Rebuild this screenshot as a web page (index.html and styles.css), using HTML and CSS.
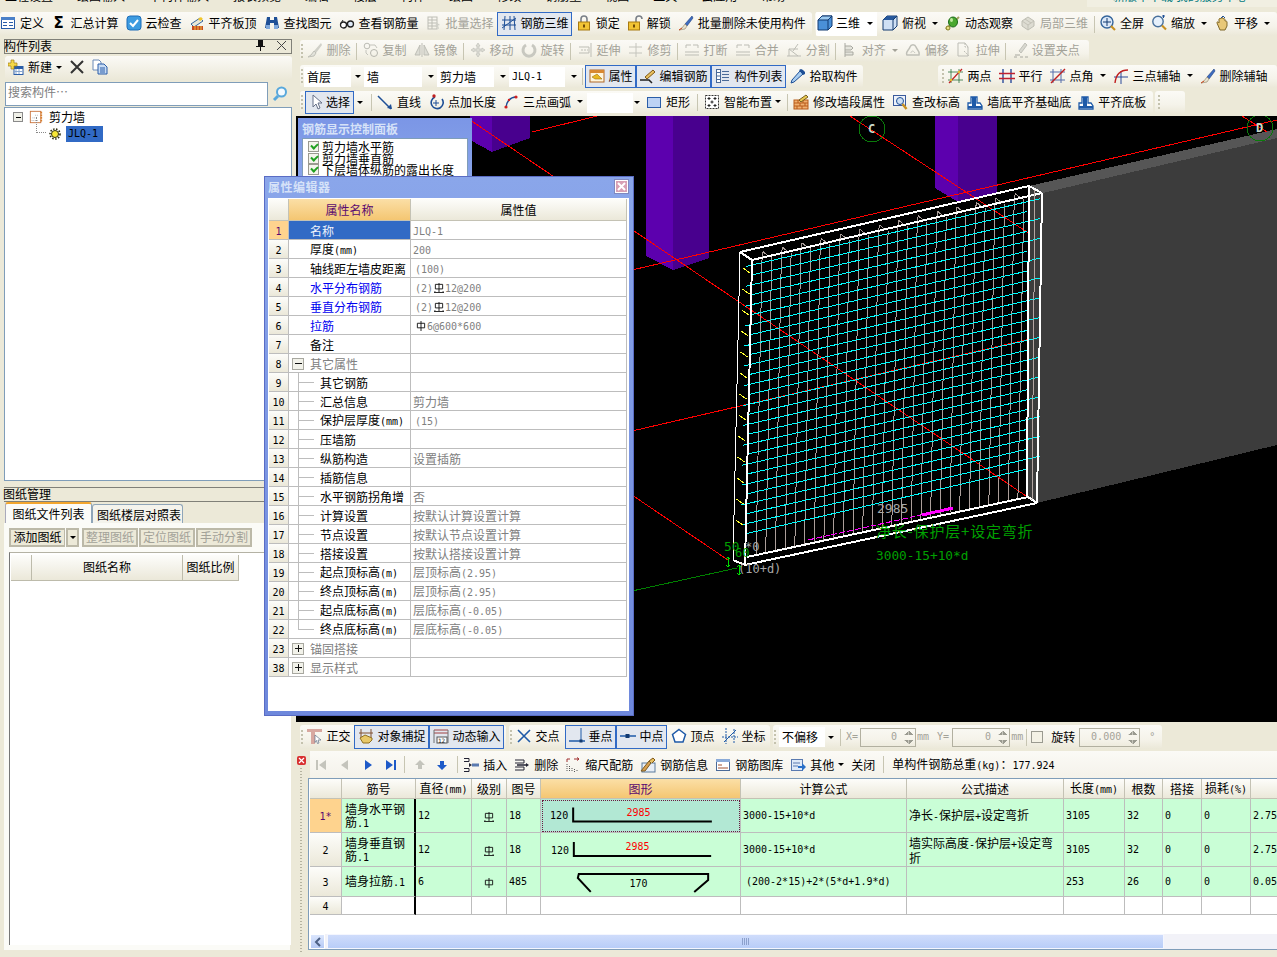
FILE: index.html
```html
<!DOCTYPE html>
<html lang="zh-CN">
<head>
<meta charset="utf-8">
<title>属性编辑器</title>
<link rel="stylesheet" href="styles.css">
</head>
<body>
<svg class="defs" width="0" height="0">
<defs>
<symbol id="def" viewBox="0 0 16 16"><rect x="1.5" y="2.5" width="13" height="11" fill="#fff" stroke="#2a5da8"/><rect x="1" y="2" width="14" height="3" fill="#4a80c8"/><path d="M3 7.5h4M3 10.5h4M9 7.5h4M9 10.5h4" stroke="#2a5da8"/></symbol>
<symbol id="cloud" viewBox="0 0 16 16"><rect x="1" y="1" width="14" height="14" rx="3" fill="#3d9be0" stroke="#1c6cb8"/><path d="M4 8l3 3 5-6" fill="none" stroke="#fff" stroke-width="2"/></symbol>
<symbol id="aligntop" viewBox="0 0 16 16"><path d="M2 9l9-6 3 3-9 6z" fill="#e8e8d8" stroke="#35659c"/><path d="M9 4l3-2 2 2-3 2z" fill="#f4c828"/><rect x="3" y="11" width="11" height="4" fill="#c84a20"/><path d="M6 11v4M9 11v4M12 11v4" stroke="#f0c040"/></symbol>
<symbol id="binoc" viewBox="0 0 16 16"><path d="M3 2h3v3h4V2h3l2 11h-5V8H6v5H1z" fill="#1e4f96"/><rect x="2" y="10" width="4" height="4" fill="#7fa8dc"/><rect x="10" y="10" width="4" height="4" fill="#7fa8dc"/></symbol>
<symbol id="glass" viewBox="0 0 16 16"><circle cx="4.5" cy="10" r="3" fill="#fff" stroke="#222" stroke-width="1.300"/><circle cx="11.5" cy="9" r="3" fill="#dfeaf8" stroke="#222" stroke-width="1.300"/><path d="M7 8.5l2-1M1.5 9L4 5" stroke="#222" fill="none"/></symbol>
<symbol id="batch" viewBox="0 0 16 16"><rect x="2" y="2" width="9" height="12" fill="none" stroke="#bdbdb5"/><path d="M2 5h9M2 8h9M2 11h9M6 2v12" stroke="#bdbdb5"/><path d="M10 7l4 3-2 .5 1 3-1 .5-1-3-1.5 1z" fill="#d0d0c8"/></symbol>
<symbol id="r3d" viewBox="0 0 16 16"><path d="M1 5h14M1 10h14M4 1l-1 14M9 1v14M13 1l1 14" stroke="#1e4f96" fill="none"/><path d="M1 13L15 3" stroke="#1e4f96"/></symbol>
<symbol id="lock" viewBox="0 0 16 16"><path d="M5 7V4a3 3 0 0 1 6 0v3" fill="none" stroke="#7a8088" stroke-width="1.600"/><rect x="2.5" y="7" width="11" height="8" fill="#f2c434" stroke="#a87a10"/><rect x="7" y="9.5" width="2" height="3" fill="#704c08"/></symbol>
<symbol id="unlock" viewBox="0 0 16 16"><path d="M9 7V4a3 3 0 0 1 6 0" fill="none" stroke="#7a8088" stroke-width="1.600"/><rect x="1.5" y="7" width="11" height="8" fill="#f2c434" stroke="#a87a10"/><rect x="6" y="9.5" width="2" height="3" fill="#704c08"/></symbol>
<symbol id="brush" viewBox="0 0 16 16"><path d="M14 1L7 9l2 2 6-8z" fill="#3d6cc0" stroke="#1e3f80" stroke-width=".6"/><path d="M7 9l2 2-2 3-6 1 3-2z" fill="#e8e4d0" stroke="#8a7a60" stroke-width=".6"/><path d="M1 15l3-2" stroke="#d04a20"/></symbol>
<symbol id="cube" viewBox="0 0 16 16"><path d="M1 5l4-4h10v10l-4 4H1z" fill="#4a90d8" stroke="#123a70"/><path d="M1 5l4-4h10l-4 4z" fill="#9ccaf0"/><path d="M1 5l4-4h10l-4 4H1M11 5v10M11 5l4-4" fill="none" stroke="#123a70"/></symbol>
<symbol id="cubet" viewBox="0 0 16 16"><path d="M1 5l4-4h10v10l-4 4H1z" fill="#cfe0f4" stroke="#123a70"/><path d="M1 5l4-4h10l-4 4z" fill="#28589c"/><path d="M11 5v10M11 5l4-4" stroke="#123a70"/></symbol>
<symbol id="orbit" viewBox="0 0 16 16"><path d="M1 14L14 2" stroke="#a0a060" stroke-width="2"/><ellipse cx="8" cy="7" rx="4.5" ry="5" fill="#4aa830" stroke="#1a6a18"/><ellipse cx="6.5" cy="5" rx="1.5" ry="2" fill="#bfe8a0"/><circle cx="3" cy="13" r="2" fill="#e8e080" stroke="#807820"/></symbol>
<symbol id="part3d" viewBox="0 0 16 16"><path d="M2 6l6-4 6 4v5l-6 4-6-4z" fill="#dddcd2" stroke="#bdbcb2"/><path d="M2 6l6 4 6-4M8 10v5M5 4l6 4" fill="none" stroke="#c2c1b6"/></symbol>
<symbol id="zfull" viewBox="0 0 16 16"><circle cx="7" cy="7" r="6" fill="#dbe8f8" stroke="#35659c" stroke-width="1.400"/><path d="M7 3v8M3 7h8" stroke="#123a70"/><path d="M11 11l4 4" stroke="#c89020" stroke-width="2.200"/></symbol>
<symbol id="zoom" viewBox="0 0 16 16"><circle cx="7" cy="6.5" r="5.200" fill="#e6f0fb" stroke="#48709c" stroke-width="1.400"/><path d="M11 10.5l4 4" stroke="#c89020" stroke-width="2.200"/><path d="M11 1h3M12.5 0v3" stroke="#1e4f96"/></symbol>
<symbol id="pan" viewBox="0 0 16 16"><path d="M3 8c0-2 1-1 2 0V4c1-1 1-1 2 0V3c1-1 1-1 2 0v1c1-1 2 0 2 1v1c1 0 2 0 2 1v4l-2 4H6z" fill="#e8c878" stroke="#806828"/><path d="M9 1L11 3M9 1L7 3" stroke="#1e4f96"/></symbol>
<symbol id="gbrush" viewBox="0 0 16 16"><path d="M14 1L7 9l2 2 6-8z" fill="#d0d0c8"/><path d="M7 9l2 2-2 3-6 1 3-2z" fill="#e2e2da" stroke="#c0c0b8"/></symbol>
<symbol id="gcopy" viewBox="0 0 16 16"><circle cx="4" cy="4" r="2.800" fill="none" stroke="#bdbdb5"/><circle cx="11" cy="11" r="3.5" fill="none" stroke="#b5b5ad"/><path d="M7 3h5l2 3M3 8v3l2 2" fill="none" stroke="#c4c4bc"/></symbol>
<symbol id="gmirror" viewBox="0 0 16 16"><path d="M1 13L6 3v10zM15 13L10 3v10z" fill="#dcdcd4" stroke="#bdbdb5"/><path d="M8 1v14" stroke="#bdbdb5"/></symbol>
<symbol id="gmove" viewBox="0 0 16 16"><path d="M8 1l2 3H9v3h3V6l3 2-3 2V9H9v3h1l-2 3-2-3h1V9H4v1L1 8l3-2v1h3V4H6z" fill="#dcdcd4" stroke="#bdbdb5" stroke-width=".6"/></symbol>
<symbol id="grotate" viewBox="0 0 16 16"><path d="M11 3a6 6 0 1 1-6 0" fill="none" stroke="#c8c8c0" stroke-width="3"/></symbol>
<symbol id="gextend" viewBox="0 0 16 16"><path d="M14 1v14M2 5h10v6H2" fill="none" stroke="#bdbdb5"/><path d="M4 8h7" stroke="#bdbdb5" stroke-dasharray="2 1"/></symbol>
<symbol id="gtrim" viewBox="0 0 16 16"><path d="M8 1v14M1 5h13M1 11h13" fill="none" stroke="#c4c4bc"/></symbol>
<symbol id="gbreak" viewBox="0 0 16 16"><path d="M2 3h5M9 3h5M2 3v3M14 3v3M1 10h14M1 13h14" stroke="#bdbdb5" fill="none"/></symbol>
<symbol id="gsplit" viewBox="0 0 16 16"><path d="M1 14h14M3 14V7h9M3 7l9 7M12 2L7 9" stroke="#bdbdb5" fill="none"/></symbol>
<symbol id="galign" viewBox="0 0 16 16"><path d="M3 1v14M3 4h6l2 2-2 2H3M3 10h8v3H3" fill="#e4e4dc" stroke="#a8a8a0"/></symbol>
<symbol id="goffset" viewBox="0 0 16 16"><path d="M2 13c-2-3 2-5 3-8 1-3 5-3 6 0 1 3 4 4 3 8z" fill="none" stroke="#c0c0b8" stroke-width="1.5"/><path d="M6 11c0-2 2-3 4 0" fill="none" stroke="#c8c8c0"/></symbol>
<symbol id="gstretch" viewBox="0 0 16 16"><path d="M2 1h7l3 4v9H2z" fill="none" stroke="#bdbdb5"/><path d="M9 1v4h3M8 9l5 5" stroke="#bdbdb5" fill="none" stroke-dasharray="2 1"/></symbol>
<symbol id="ggrip" viewBox="0 0 16 16"><path d="M13 1l-6 8 2 2 6-8z" fill="#d8d8d0" stroke="#c0c0b8"/><path d="M2 15h3M8 15h3M13 15h3M3 13h5" stroke="#a8a8a0"/></symbol>
<symbol id="prop" viewBox="0 0 16 16"><rect x="1" y="2" width="14" height="12" fill="#fff6dc" stroke="#b06828"/><rect x="1" y="2" width="14" height="3" fill="#d88830"/><path d="M3 9l5-3 5 5H6z" fill="#e8b820" stroke="#a07010" stroke-width=".6"/></symbol>
<symbol id="edit" viewBox="0 0 16 16"><path d="M0 12h9l3 3" stroke="#222" fill="none" stroke-width="1.5"/><path d="M5 9l8-7 2 2-8 7z" fill="#e8c060" stroke="#805818"/></symbol>
<symbol id="list" viewBox="0 0 16 16"><rect x="1.5" y="1.5" width="4" height="13" fill="#fff" stroke="#4a6a98"/><path d="M2 4.5h3M2 8h3M2 11.5h3M7 3.5h7M7 6.5h7M7 9.5h7M7 12.5h7" stroke="#4a6a98"/></symbol>
<symbol id="pipette" viewBox="0 0 16 16"><path d="M10 3L2 12l-1 3 3-1 9-8z" fill="#a8cdf0" stroke="#1e4f96"/><path d="M9 2l2-1 2 1 2 2 0 2-2 1z" fill="#1e4f96"/></symbol>
<symbol id="twop" viewBox="0 0 16 16"><path d="M3 1v14M11 1v14M0 4h15M0 12h15" stroke="#1e6a30" fill="none" opacity=".75"/><path d="M1 15L14 1" stroke="#c02020" stroke-width="1.200"/><circle cx="3" cy="12" r="1.200" fill="#e8c030"/><circle cx="11" cy="4" r="1.200" fill="#e8c030"/></symbol>
<symbol id="para" viewBox="0 0 16 16"><path d="M4 1v14M12 1v14" stroke="#2a4a9a" stroke-width="1.400"/><path d="M0 5.5h16M0 10.5h16" stroke="#c02030" stroke-width="1.400"/></symbol>
<symbol id="angle" viewBox="0 0 16 16"><path d="M3 1v14M11 1v14M0 4h15M0 12h15" stroke="#2a4a9a" opacity=".8"/><path d="M1 15L15 1" stroke="#c02020" stroke-width="1.400"/></symbol>
<symbol id="arcax" viewBox="0 0 16 16"><path d="M1 9h14M8 3v13" stroke="#2a4a9a" fill="none"/><path d="M2 15C3 6 8 2 15 2" stroke="#c02020" fill="none" stroke-width="1.400"/></symbol>
<symbol id="cursor" viewBox="0 0 16 16"><path d="M4 1v12l3-3 2 5 2-1-2-5h4z" fill="#fff" stroke="#667088"/></symbol>
<symbol id="line" viewBox="0 0 16 16"><path d="M1 2l13 13" stroke="#1e4f96" stroke-width="1.5"/><path d="M15 15l-5-1 4-4z" fill="#1e4f96"/></symbol>
<symbol id="ptlen" viewBox="0 0 16 16"><path d="M7 3a6 6 0 1 0 7 2" fill="none" stroke="#1e4f96" stroke-width="1.600"/><path d="M8 6v6M5 9h6" stroke="#1e4f96"/><circle cx="6" cy="2" r="1.700" fill="#c02020"/></symbol>
<symbol id="arc" viewBox="0 0 16 16"><path d="M3 14C3 8 7 3 13 3" fill="none" stroke="#1e4f96" stroke-width="1.5"/><circle cx="3" cy="13" r="1.600" fill="#d02020"/><circle cx="13" cy="3" r="1.600" fill="#d02020"/><circle cx="6" cy="6" r="1.200" fill="#d02020"/></symbol>
<symbol id="rect" viewBox="0 0 16 16"><rect x="1.5" y="3.5" width="13" height="10" fill="#bcd2f4" stroke="#2a5da8"/></symbol>
<symbol id="smart" viewBox="0 0 16 16"><rect x="1.5" y="1.5" width="13" height="13" fill="#fff" stroke="#333" stroke-dasharray="2 1"/><path d="M5 3v3M3.5 4.5h3M11 3v3M9.5 4.5h3M5 10v3M3.5 11.5h3M11 10v3M9.5 11.5h3M8 6.5v3M6.5 8h3" stroke="#222"/></symbol>
<symbol id="wedit" viewBox="0 0 16 16"><rect x="1" y="6" width="14" height="9" fill="#f0b070" stroke="#b85a18"/><path d="M1 9h14M1 12h14M5 6v3M10 6v3M7 9v3M12 9v3M4 12v3M9 12v3" stroke="#b85a18"/><path d="M6 6l7-5 2 2-7 5z" fill="#e8c850" stroke="#786020"/></symbol>
<symbol id="elev" viewBox="0 0 16 16"><rect x="1.5" y="1.5" width="12" height="10" fill="#eef2fa" stroke="#3a5a9c"/><circle cx="8" cy="7" r="3.5" fill="#cfe0f4" stroke="#1e4f96"/><path d="M10.5 10l4 5" stroke="#c89020" stroke-width="2.400"/></symbol>
<symbol id="wbase" viewBox="0 0 16 16"><path d="M1 15V9h3V3h6v6h3l2 3v3z" fill="#fff" stroke="#1e5aa8" stroke-width="1.300"/><rect x="5" y="3" width="4" height="9" fill="#1e5aa8"/><path d="M1 13h14" stroke="#1e5aa8" stroke-width="2"/></symbol>
<symbol id="ortho" viewBox="0 0 16 16"><path d="M0 1h15v3H8v12H4V4H0z" fill="#d8a8a0"/><path d="M8 7l6 5-3 0 1 3-1.5 .5-1-3-1.5 2z" fill="#fff" stroke="#607088" stroke-width=".7"/></symbol>
<symbol id="snap" viewBox="0 0 16 16"><path d="M3 1v9M13 1v9M1 5h14" stroke="#805030"/><path d="M2 10l5-3 7 3v2l-3 3H5z" fill="#e8c868" stroke="#907020"/></symbol>
<symbol id="dyn" viewBox="0 0 16 16"><path d="M1 2h14M1 5h14" stroke="#a04040"/><path d="M1 2v13M15 2v13" stroke="#707070"/><rect x="4" y="9" width="10" height="6" fill="#fff" stroke="#555"/><text x="5" y="14.5" font-size="6" font-family="DejaVu Sans Mono" fill="#222">12</text></symbol>
<symbol id="xpt" viewBox="0 0 16 16"><path d="M2 2l12 12M14 2L2 14" stroke="#1e5aa8" stroke-width="1.600"/></symbol>
<symbol id="perp" viewBox="0 0 16 16"><path d="M0 13h16" stroke="#1e5aa8" stroke-width="1.600"/><path d="M12 0v13" stroke="#1e5aa8"/><rect x="10.5" y="11.5" width="3" height="3" fill="#123a70"/></symbol>
<symbol id="mid" viewBox="0 0 16 16"><path d="M0 8h16" stroke="#1e5aa8" stroke-width="1.600"/><rect x="5.5" y="6" width="4" height="4" fill="#123a70"/></symbol>
<symbol id="penta" viewBox="0 0 16 16"><path d="M8 1.5l6.5 5-2.5 7.5H4l-2.5-7.5z" fill="#fff" stroke="#1e5aa8" stroke-width="1.5"/></symbol>
<symbol id="coord" viewBox="0 0 16 16"><path d="M4 0v16M0 9h16" stroke="#1e5aa8" stroke-dasharray="2 1"/><path d="M12 1v14" stroke="#1e5aa8" stroke-dasharray="2 1"/><path d="M2 14L14 2" stroke="#1e5aa8"/></symbol>
<symbol id="navf" viewBox="0 0 16 16"><rect x="3" y="3" width="2" height="10" fill="currentColor"/><path d="M13 3v10L6 8z" fill="currentColor"/></symbol>
<symbol id="navp" viewBox="0 0 16 16"><path d="M12 3v10L5 8z" fill="currentColor"/></symbol>
<symbol id="navn" viewBox="0 0 16 16"><path d="M5 3v10l7-5z" fill="currentColor"/></symbol>
<symbol id="navl" viewBox="0 0 16 16"><rect x="11" y="3" width="2" height="10" fill="currentColor"/><path d="M3 3v10l7-5z" fill="currentColor"/></symbol>
<symbol id="up" viewBox="0 0 16 16"><path d="M8 3l5 5h-3v4H6V8H3z" fill="currentColor"/></symbol>
<symbol id="down" viewBox="0 0 16 16"><path d="M8 13l5-5h-3V4H6v4H3z" fill="currentColor"/></symbol>
<symbol id="ins" viewBox="0 0 16 16"><path d="M1 1.5h5v3H1M1 11.5h5v3H1" fill="none" stroke="#223"/><rect x="9" y="6.5" width="7" height="3" fill="#5a7ab0"/><path d="M9 8l-3-2v4z" fill="#223"/></symbol>
<symbol id="del" viewBox="0 0 16 16"><path d="M1 3h9v3H1M1 10h9v3H1" fill="none" stroke="#223"/><path d="M3 8h9" stroke="#223" stroke-width="1.5"/><path d="M15 8l-3-2v4z" fill="#223"/></symbol>
<symbol id="scale" viewBox="0 0 16 16"><path d="M2 2h3M2 2v3M9 2h5M14 2l-2-1.5M14 2l-2 1.5" stroke="#a03030" fill="none"/><path d="M2 7v8M4.5 9v6M7 11v4M9.5 12v3M12 13v2" stroke="#555" stroke-dasharray="1 1"/></symbol>
<symbol id="info" viewBox="0 0 16 16"><rect x="2" y="6" width="13" height="9" fill="#e8eef6" stroke="#5a7a9c"/><path d="M9 4l4-3 2 2-3 3" fill="#e8c060" stroke="#805818"/><path d="M1 14L9 4l2 2-6 8z" fill="#d8a050" stroke="#7a5a20"/></symbol>
<symbol id="lib" viewBox="0 0 16 16"><rect x="1.5" y="2.5" width="13" height="11" fill="#fff" stroke="#4a6a98"/><rect x="1" y="2" width="14" height="3" fill="#8aaad8"/><path d="M3 8h4M3 11h10" stroke="#a05030"/></symbol>
<symbol id="other" viewBox="0 0 16 16"><rect x="1.5" y="2.5" width="11" height="11" fill="#dfeaf8" stroke="#5a7ab0"/><path d="M3 6h7M3 9h5" stroke="#5a7ab0"/><path d="M8 9h4V6l4 4-4 4v-3H8z" fill="#2a70c8"/></symbol>
<symbol id="new" viewBox="0 0 16 16"><rect x="6" y="7.5" width="9" height="8" fill="#fff" stroke="#2a5da8"/><rect x="6" y="7.5" width="9" height="2.5" fill="#2a5da8"/><path d="M8 10v5M11 10v5M6 12.5h9" stroke="#8aa8d0"/><path d="M3 1h3v3h3v3H6v3H3V7H0V4h3z" fill="#f4d848" stroke="#a08018" stroke-width=".7"/></symbol>
<symbol id="xx" viewBox="0 0 16 16"><path d="M2 2l12 12M14 2L2 14" stroke="#333" stroke-width="2"/></symbol>
<symbol id="docs" viewBox="0 0 16 16"><path d="M1 1h6l2 2v8H1z" fill="#fff" stroke="#6a8ab8"/><path d="M6 5h6l3 3v7H6z" fill="#c8dcf4" stroke="#2a5da8"/><path d="M8 9h5M8 11h5M8 13h5" stroke="#2a5da8"/></symbol>
<symbol id="search" viewBox="0 0 16 16"><circle cx="9.5" cy="6" r="4.5" fill="#f4faff" stroke="#58a8dc" stroke-width="2"/><path d="M6 10l-4 4" stroke="#58a8dc" stroke-width="3"/></symbol>
<symbol id="wall" viewBox="0 0 16 16"><rect x="1.5" y="1.5" width="12" height="13" fill="#fff" stroke="#c87038"/><path d="M3 12h8M4 9h6M7 6h3" stroke="#a8a8a8" stroke-dasharray="1 1"/><path d="M14 2v12" stroke="#d88030" stroke-width="2" stroke-dasharray="2 1"/></symbol>
<symbol id="gear" viewBox="0 0 12 12"><circle cx="6" cy="6" r="3.5" fill="#f8e838" stroke="#303010" stroke-width="1"/><circle cx="6" cy="6" r="5" fill="none" stroke="#303010" stroke-width="1.600" stroke-dasharray="1.5 1.5"/></symbol>
<symbol id="rb1" viewBox="0 0 11 11"><path d="M1.5 2.5h8v5h-8zM5.5 0v11" fill="none" stroke="#111"/></symbol>
<symbol id="rb2" viewBox="0 0 11 11"><path d="M1.5 1.5h8v5h-8zM5.5 0v10M0 10.5h11M1 9v1M10 9v1" fill="none" stroke="#111"/></symbol>
</defs>
</svg>

<div class="app">
  <div class="topstrip">
    <div class="topcut">
      <span>工程设置</span><span>绘图输入</span><span>单构件输入</span><span>报表预览</span><span>编辑</span><span>楼层</span><span>构件</span><span>绘图</span><span>修改</span><span>钢筋量</span><span>视图</span><span>工具</span><span>云应用</span><span>帮助</span>
    </div>
    <div class="topnote">
      <div class="topcut topcut-teal"><span>新版本下载 我的服务中心</span></div>
    </div>
  </div>

  <div class="tbrow">
    <div class="group g-main">
      <div class="it it-first"><svg class="ic"><use href="#def"/></svg><span>定义</span></div>
      <div class="it it-sig"><span class="ic sigma">Σ</span><span>汇总计算</span></div>
      <div class="it"><svg class="ic"><use href="#cloud"/></svg><span>云检查</span></div>
      <div class="it"><svg class="ic"><use href="#aligntop"/></svg><span>平齐板顶</span></div>
      <div class="it"><svg class="ic"><use href="#binoc"/></svg><span>查找图元</span></div>
      <div class="it"><svg class="ic"><use href="#glass"/></svg><span>查看钢筋量</span></div>
      <div class="it dis"><svg class="ic"><use href="#batch"/></svg><span>批量选择</span></div>
      <div class="it on"><svg class="ic"><use href="#r3d"/></svg><span>钢筋三维</span></div>
      <div class="it"><svg class="ic"><use href="#lock"/></svg><span>锁定</span></div>
      <div class="it"><svg class="ic"><use href="#unlock"/></svg><span>解锁</span></div>
      <div class="it"><svg class="ic"><use href="#brush"/></svg><span>批量删除未使用构件</span></div>
    </div>
    <div class="group g-view">
      <div class="it it-white"><svg class="ic"><use href="#cube"/></svg><span>三维</span><i class="ar"></i></div>
      <div class="it"><svg class="ic"><use href="#cubet"/></svg><span>俯视</span><i class="ar"></i></div>
      <div class="it"><svg class="ic"><use href="#orbit"/></svg><span>动态观察</span></div>
      <div class="it dis"><svg class="ic"><use href="#part3d"/></svg><span>局部三维</span></div>
      <i class="sep"></i>
      <div class="it"><svg class="ic"><use href="#zfull"/></svg><span>全屏</span></div>
      <div class="it"><svg class="ic"><use href="#zoom"/></svg><span>缩放</span><i class="ar"></i></div>
      <div class="it"><svg class="ic"><use href="#pan"/></svg><span>平移</span><i class="ar"></i></div>
    </div>
  </div>

  <div class="main">
    <aside class="left">
      <div class="ptitle"><span>构件列表</span><span class="ptitle-btns"><svg class="pin" viewBox="0 0 9 11"><path d="M2 0h5v6h2v1H5v4H4V7H0V6h2z" fill="#111"/></svg><svg class="close" viewBox="0 0 9 9"><path d="M0 0l9 9M9 0L0 9" stroke="#444"/></svg></span></div>
      <div class="ltool">
        <div class="it it-new"><svg class="ic"><use href="#new"/></svg><span>新建</span><i class="ar"></i></div>
        <div class="it"><svg class="ic"><use href="#xx"/></svg></div>
        <div class="it"><svg class="ic"><use href="#docs"/></svg></div>
      </div>
      <div class="lsearch">
        <div class="sinput">搜索构件…</div>
        <svg class="ic sbtn"><use href="#search"/></svg>
      </div>
      <div class="tree">
        <div class="tnode">
          <i class="minus"></i><svg class="ic ic14"><use href="#wall"/></svg><span>剪力墙</span>
        </div>
        <div class="tnode tnode-sub">
          <i class="dots"></i><svg class="gearic"><use href="#gear"/></svg><span class="tsel m">JLQ-1</span>
        </div>
      </div>

      <div class="lower">
        <div class="ptitle ptitle-plain"><span>图纸管理</span></div>
        <div class="tabs">
          <div class="tab tab-on">图纸文件列表</div>
          <div class="tab">图纸楼层对照表</div>
        </div>
        <div class="tabpanel">
          <div class="btnrow">
            <span class="bt bt-add">添加图纸</span><span class="bt bt-ar"><i class="ar"></i></span>
            <span class="bt bt-dis">整理图纸</span><span class="bt bt-dis">定位图纸</span><span class="bt bt-dis">手动分割</span>
          </div>
          <div class="dwg">
            <div class="dwghead">
              <span class="dh dh0"></span><span class="dh dh1">图纸名称</span><span class="dh dh2">图纸比例</span>
            </div>
          </div>
        </div>
      </div>
    </aside>

    <section class="right">
      <div class="tbrow2">
        <div class="group g2">
          <i class="grip"></i>
          <div class="it dis"><svg class="ic"><use href="#gbrush"/></svg><span>删除</span></div><i class="sep"></i>
          <div class="it dis"><svg class="ic"><use href="#gcopy"/></svg><span>复制</span></div>
          <div class="it dis"><svg class="ic"><use href="#gmirror"/></svg><span>镜像</span></div><i class="sep"></i>
          <div class="it dis"><svg class="ic"><use href="#gmove"/></svg><span>移动</span></div>
          <div class="it dis"><svg class="ic"><use href="#grotate"/></svg><span>旋转</span></div><i class="sep"></i>
          <div class="it dis"><svg class="ic"><use href="#gextend"/></svg><span>延伸</span></div>
          <div class="it dis"><svg class="ic"><use href="#gtrim"/></svg><span>修剪</span></div><i class="sep"></i>
          <div class="it dis"><svg class="ic"><use href="#gbreak"/></svg><span>打断</span></div>
          <div class="it dis"><svg class="ic"><use href="#gbreak"/></svg><span>合并</span></div>
          <div class="it dis"><svg class="ic"><use href="#gsplit"/></svg><span>分割</span></div><i class="sep"></i>
          <div class="it dis"><svg class="ic"><use href="#galign"/></svg><span>对齐</span><i class="ar ar-dis"></i></div>
          <div class="it dis"><svg class="ic"><use href="#goffset"/></svg><span>偏移</span></div>
          <div class="it dis"><svg class="ic"><use href="#gstretch"/></svg><span>拉伸</span></div><i class="sep"></i>
          <div class="it dis"><svg class="ic"><use href="#ggrip"/></svg><span>设置夹点</span></div>
        </div>
      </div>

      <div class="tbrow3">
        <div class="group g3">
          <i class="grip"></i>
          <div class="combo c1"><span>首层</span><i class="ar"></i></div>
          <div class="combo c2"><span>墙</span><i class="ar"></i></div>
          <div class="combo c3"><span>剪力墙</span><i class="ar"></i></div>
          <div class="combo c4"><span class="m">JLQ-1</span><i class="ar"></i></div>
          <i class="sep sep-c"></i>
          <div class="it on"><svg class="ic"><use href="#prop"/></svg><span>属性</span></div>
          <div class="it on"><svg class="ic"><use href="#edit"/></svg><span>编辑钢筋</span></div>
          <div class="it on"><svg class="ic"><use href="#list"/></svg><span>构件列表</span></div>
          <div class="it"><svg class="ic"><use href="#pipette"/></svg><span>拾取构件</span></div>
        </div>
        <div class="group g3b">
          <i class="grip"></i>
          <div class="it"><svg class="ic"><use href="#twop"/></svg><span>两点</span></div>
          <div class="it"><svg class="ic"><use href="#para"/></svg><span>平行</span></div>
          <div class="it"><svg class="ic"><use href="#angle"/></svg><span>点角</span><i class="ar"></i></div>
          <div class="it"><svg class="ic"><use href="#arcax"/></svg><span>三点辅轴</span><i class="ar"></i></div>
          <div class="it"><svg class="ic"><use href="#brush"/></svg><span>删除辅轴</span></div>
        </div>
      </div>

      <div class="tbrow4">
        <div class="group g4">
          <i class="grip"></i>
          <div class="it on it-sel"><svg class="ic"><use href="#cursor"/></svg><span>选择</span></div><i class="ar ar-s"></i>
          <i class="sep"></i>
          <div class="it"><svg class="ic"><use href="#line"/></svg><span>直线</span></div>
          <div class="it"><svg class="ic"><use href="#ptlen"/></svg><span>点加长度</span></div>
          <div class="it"><svg class="ic"><use href="#arc"/></svg><span>三点画弧</span><i class="ar"></i></div>
          <div class="combo c5"><span></span><i class="ar"></i></div>
          <div class="it"><svg class="ic"><use href="#rect"/></svg><span>矩形</span></div><i class="sep sep-w"></i>
          <div class="it"><svg class="ic"><use href="#smart"/></svg><span>智能布置</span><i class="ar ar-t"></i></div><i class="sep"></i>
          <div class="it"><svg class="ic"><use href="#wedit"/></svg><span>修改墙段属性</span></div>
          <div class="it"><svg class="ic"><use href="#elev"/></svg><span>查改标高</span></div>
          <div class="it"><svg class="ic"><use href="#wbase"/></svg><span>墙底平齐基础底</span></div>
          <div class="it"><svg class="ic"><use href="#wbase"/></svg><span>平齐底板</span></div>
        </div>
        <div class="group g4b"><i class="grip"></i></div>
      </div>

      <div class="canvas">
        <svg class="scene" viewBox="296 116 981 606" width="981" height="606">
          <polygon points="1029,186 1277,129 1277,445 1037,503 1027,497" fill="#3c3c3c"/>
          <polygon points="1029,186 1277,129 1277,138 1043,193" fill="#565656"/>
          <polygon points="470,116 492,116 492,152 470,140" fill="#5c00ae"/>
          <polygon points="492,116 530,116 530,138 492,152" fill="#48008e"/>
          <polygon points="646,116 673,116 673,270 646,256" fill="#5c00ae"/>
          <polygon points="673,116 709,116 709,258 673,270" fill="#48008e"/>
          <polygon points="935,116 958,116 958,202 935,188" fill="#5c00ae"/>
          <polygon points="958,116 997,116 997,194 958,202" fill="#48008e"/>
          <g class="reds">
            <line x1="632" y1="270" x2="1277" y2="120"/>
            <line x1="632" y1="431" x2="1030" y2="339"/>
            <line x1="470" y1="120" x2="1035" y2="502"/>
            <line x1="850" y1="116" x2="1030" y2="234"/>
            <line x1="632" y1="495" x2="728" y2="560"/>
            <line x1="532" y1="132" x2="597" y2="116"/>
            <line x1="1242" y1="116" x2="1267" y2="132"/>
          </g>
          <line x1="632" y1="591" x2="737" y2="568" stroke="#008000"/>
          <circle cx="872" cy="129" r="13" fill="none" stroke="#0a7a0a"/>
          <circle cx="1260" cy="128" r="13" fill="none" stroke="#0a7a0a"/>
          <text x="868" y="133" class="t-axis">C</text>
          <text x="1256" y="132" class="t-axis">D</text>
          <g id="mesh"></g>
          <line x1="808" y1="540" x2="953" y2="508" stroke="#ff00ff" stroke-dasharray="6 2"/>
          <line x1="922" y1="515" x2="953" y2="508" stroke="#ff00ff" stroke-width="3"/>
          <text x="877" y="513" class="t-gray">2985</text>
          <text x="876" y="537" class="t-green t-cn">净长-保护层+设定弯折</text>
          <text x="876" y="560" class="t-green">3000-15+10*d</text>
          <text x="724" y="551" class="t-green">50</text>
          <text x="745" y="551" class="t-gray t-sm">*0</text>
          <text x="735" y="557" class="t-green t-sm">60</text>
          <text x="738" y="573" class="t-gray t-sm">(10+d)</text>
          <path d="M728 557v10M726 559l2-2 2 2M726 565l2 2 2-2M739 565v10M737 567l2-2 2 2M737 573l2 2 2-2" stroke="#00e000" fill="none"/>
        </svg>
        <div class="cpanel">
          <div class="cp-title">钢筋显示控制面板</div>
          <div class="cp-body">
            <div class="cp-row"><i class="chk"></i>剪力墙水平筋</div>
            <div class="cp-row"><i class="chk"></i>剪力墙垂直筋</div>
            <div class="cp-row"><i class="chk"></i>下层墙体纵筋的露出长度</div>
          </div>
        </div>
      </div>

      <div class="snapbar">
        <div class="group s1">
          <i class="grip"></i>
          <div class="it"><svg class="ic"><use href="#ortho"/></svg><span>正交</span></div>
          <div class="it on"><svg class="ic"><use href="#snap"/></svg><span>对象捕捉</span></div>
          <div class="it on"><svg class="ic"><use href="#dyn"/></svg><span>动态输入</span></div>
        </div>
        <div class="group s2">
          <i class="grip"></i>
          <div class="it"><svg class="ic"><use href="#xpt"/></svg><span>交点</span></div>
          <div class="it on it-gap"><svg class="ic"><use href="#perp"/></svg><span>垂点</span></div>
          <div class="it on"><svg class="ic"><use href="#mid"/></svg><span>中点</span></div>
          <div class="it"><svg class="ic"><use href="#penta"/></svg><span>顶点</span></div>
          <div class="it"><svg class="ic"><use href="#coord"/></svg><span>坐标</span></div>
        </div>
        <div class="group s3">
          <i class="grip"></i>
          <div class="combo c6"><span>不偏移</span><i class="ar"></i></div>
          <i class="sep"></i>
          <span class="m lblg lblx">X=</span>
          <div class="spin spin-x"><span class="m">0</span><i class="sp"></i></div>
          <span class="m lblg lblmm">mm</span>
          <span class="m lblg lbly">Y=</span>
          <div class="spin spin-xy"><span class="m">0</span><i class="sp"></i></div>
          <span class="m lblg lblmm">mm</span>
          <i class="sep"></i>
          <i class="cbx"></i>
          <span class="rot">旋转</span>
          <div class="spin spin-r"><span class="m">0.000</span><i class="sp"></i></div>
          <span class="m lblg lbld">°</span>
        </div>
      </div>

      <div class="lowerright">
        <div class="sidegrip"><svg class="redx" viewBox="0 0 9 9"><rect width="9" height="9" rx="2" fill="#d83030"/><path d="M2 2l5 5M7 2L2 7" stroke="#fff" stroke-width="1.200"/></svg><i class="gripv"></i></div>
        <div class="gridwrap">
          <div class="gridtool">
            <svg class="ic nav off"><use href="#navf"/></svg>
            <svg class="ic nav off"><use href="#navp"/></svg>
            <svg class="ic nav"><use href="#navn"/></svg>
            <svg class="ic nav"><use href="#navl"/></svg>
            <i class="sep sep-a"></i>
            <svg class="ic nav nav-up off"><use href="#up"/></svg>
            <svg class="ic nav nav-down"><use href="#down"/></svg>
            <i class="sep sep-b"></i>
            <div class="it"><svg class="ic"><use href="#ins"/></svg><span>插入</span></div>
            <div class="it"><svg class="ic"><use href="#del"/></svg><span>删除</span></div>
            <div class="it"><svg class="ic"><use href="#scale"/></svg><span>缩尺配筋</span></div>
            <div class="it"><svg class="ic"><use href="#info"/></svg><span>钢筋信息</span></div>
            <div class="it"><svg class="ic"><use href="#lib"/></svg><span>钢筋图库</span></div>
            <div class="it it-other"><svg class="ic"><use href="#other"/></svg><span>其他</span><i class="ar"></i></div>
            <div class="it"><span>关闭</span></div>
            <i class="sep sep-d"></i>
            <div class="it total"><span>单构件钢筋总重<span class="m">(kg)</span>：<span class="m">177.924</span></span></div>
          </div>
          <div class="gridbox">
            <div class="gridscroll">
              <table class="rt">
                <colgroup><col class="w0"><col class="w1"><col class="w2"><col class="w3"><col class="w4"><col class="w5"><col class="w6"><col class="w7"><col class="w8"><col class="w9"><col class="w10"><col class="w11"><col class="w12"></colgroup>
                <tr class="rh"><th></th><th>筋号</th><th>直径<span class="m">(mm)</span></th><th>级别</th><th>图号</th><th class="oh">图形</th><th>计算公式</th><th>公式描述</th><th>长度<span class="m">(mm)</span></th><th>根数</th><th>搭接</th><th>损耗<span class="m">(%)</span></th><th>单重</th></tr>
                <tr class="r1">
                  <td class="no no-on"><span class="m">1*</span></td><td class="nm">墙身水平钢筋<span class="m">.1</span></td><td class="m">12</td><td class="c"><svg class="rb"><use href="#rb2"/></svg></td><td class="m">18</td>
                  <td class="shape sel"><svg class="shp" viewBox="0 0 198 32"><text x="9" y="19" class="s-n">120</text><text x="97" y="17" class="s-r">2985</text><path d="M32 8v14h138" class="s-l"/></svg></td>
                  <td class="m">3000-15+10*d</td><td>净长<span class="m">-</span>保护层<span class="m">+</span>设定弯折</td><td class="m">3105</td><td class="m">32</td><td class="m">0</td><td class="m">0</td><td class="m">2.757</td>
                </tr>
                <tr class="r2">
                  <td class="no"><span class="m">2</span></td><td class="nm">墙身垂直钢筋<span class="m">.1</span></td><td class="m">12</td><td class="c"><svg class="rb"><use href="#rb2"/></svg></td><td class="m">18</td>
                  <td class="shape"><svg class="shp" viewBox="0 0 200 33"><text x="10" y="21" class="s-n">120</text><text x="97" y="17" class="s-r">2985</text><path d="M33 9v14h138" class="s-l"/></svg></td>
                  <td class="m">3000-15+10*d</td><td class="tw">墙实际高度<span class="m">-</span>保护层<span class="m">+</span>设定弯折</td><td class="m">3105</td><td class="m">32</td><td class="m">0</td><td class="m">0</td><td class="m">2.757</td>
                </tr>
                <tr class="r3">
                  <td class="no"><span class="m">3</span></td><td class="nm">墙身拉筋<span class="m">.1</span></td><td class="m">6</td><td class="c"><svg class="rb"><use href="#rb1"/></svg></td><td class="m">485</td>
                  <td class="shape"><svg class="shp" viewBox="0 0 200 29"><text x="98" y="20" class="s-n s-mid">170</text><path d="M50 25L37 11l1-4h130v6l-14 12" class="s-l"/></svg></td>
                  <td class="m f3">(200-2*15)+2*(5*d+1.9*d)</td><td></td><td class="m">253</td><td class="m">26</td><td class="m">0</td><td class="m">0</td><td class="m">0.055</td>
                </tr>
                <tr class="r4"><td class="no"><span class="m">4</span></td><td class="nm"></td><td></td><td></td><td></td><td></td><td></td><td></td><td></td><td></td><td></td><td></td><td></td></tr>
              </table>
            </div>
            <div class="hscroll">
              <i class="hs-btn"><svg viewBox="0 0 8 10" width="8" height="10"><path d="M6 1L2 5l4 4" fill="none" stroke="#4d6185" stroke-width="2"/></svg></i>
              <div class="hs-thumb"><i class="hs-lines"></i></div>
            </div>
          </div>
        </div>
      </div>
    </section>
  </div>
</div>

<div class="dialog">
  <div class="dl-title"><span>属性编辑器</span><i class="dl-x"><svg viewBox="0 0 9 9" width="9" height="9"><path d="M1 1l7 7M8 1L1 8" stroke="#fff" stroke-width="2"/></svg></i></div>
  <div class="dl-body">
    <table class="pt">
      <colgroup><col class="p0"><col class="p1"><col class="p2"></colgroup>
      <tr class="ph"><th></th><th class="oh">属性名称</th><th>属性值</th></tr>
      <tr><td class="pn pn-on"><span class="m">1</span></td><td class="a0 nm-sel">名称</td><td class="v"><span class="m">JLQ-1</span></td></tr>
      <tr><td class="pn"><span class="m">2</span></td><td class="a0">厚度<span class="m">(mm)</span></td><td class="v"><span class="m">200</span></td></tr>
      <tr><td class="pn"><span class="m">3</span></td><td class="a0">轴线距左墙皮距离</td><td class="v v2"><span class="m">(100)</span></td></tr>
      <tr><td class="pn"><span class="m">4</span></td><td class="a0 blue">水平分布钢筋</td><td class="v v2"><span class="m">(2)</span><svg class="rb"><use href="#rb2"/></svg><span class="m">12@200</span></td></tr>
      <tr><td class="pn"><span class="m">5</span></td><td class="a0 blue">垂直分布钢筋</td><td class="v v2"><span class="m">(2)</span><svg class="rb"><use href="#rb2"/></svg><span class="m">12@200</span></td></tr>
      <tr><td class="pn"><span class="m">6</span></td><td class="a0 blue">拉筋</td><td class="v v2"><svg class="rb"><use href="#rb1"/></svg><span class="m">6@600*600</span></td></tr>
      <tr><td class="pn"><span class="m">7</span></td><td class="a0">备注</td><td class="v"></td></tr>
      <tr><td class="pn"><span class="m">8</span></td><td class="gry"><span class="tgl"><i class="bx bx-m"></i>其它属性</span></td><td class="v"></td></tr>
      <tr><td class="pn"><span class="m">9</span></td><td class="a1">其它钢筋</td><td class="v"></td></tr>
      <tr><td class="pn"><span class="m">10</span></td><td class="a1">汇总信息</td><td class="v">剪力墙</td></tr>
      <tr><td class="pn"><span class="m">11</span></td><td class="a1">保护层厚度<span class="m">(mm)</span></td><td class="v v2"><span class="m">(15)</span></td></tr>
      <tr><td class="pn"><span class="m">12</span></td><td class="a1">压墙筋</td><td class="v"></td></tr>
      <tr><td class="pn"><span class="m">13</span></td><td class="a1">纵筋构造</td><td class="v">设置插筋</td></tr>
      <tr><td class="pn"><span class="m">14</span></td><td class="a1">插筋信息</td><td class="v"></td></tr>
      <tr><td class="pn"><span class="m">15</span></td><td class="a1">水平钢筋拐角增</td><td class="v">否</td></tr>
      <tr><td class="pn"><span class="m">16</span></td><td class="a1">计算设置</td><td class="v">按默认计算设置计算</td></tr>
      <tr><td class="pn"><span class="m">17</span></td><td class="a1">节点设置</td><td class="v">按默认节点设置计算</td></tr>
      <tr><td class="pn"><span class="m">18</span></td><td class="a1">搭接设置</td><td class="v">按默认搭接设置计算</td></tr>
      <tr><td class="pn"><span class="m">19</span></td><td class="a1">起点顶标高<span class="m">(m)</span></td><td class="v">层顶标高<span class="m">(2.95)</span></td></tr>
      <tr><td class="pn"><span class="m">20</span></td><td class="a1">终点顶标高<span class="m">(m)</span></td><td class="v">层顶标高<span class="m">(2.95)</span></td></tr>
      <tr><td class="pn"><span class="m">21</span></td><td class="a1">起点底标高<span class="m">(m)</span></td><td class="v">层底标高<span class="m">(-0.05)</span></td></tr>
      <tr><td class="pn"><span class="m">22</span></td><td class="a1 a1e">终点底标高<span class="m">(m)</span></td><td class="v">层底标高<span class="m">(-0.05)</span></td></tr>
      <tr><td class="pn"><span class="m">23</span></td><td class="gry"><span class="tgl"><i class="bx"></i>锚固搭接</span></td><td class="v"></td></tr>
      <tr><td class="pn"><span class="m">38</span></td><td class="gry"><span class="tgl"><i class="bx"></i>显示样式</span></td><td class="v"></td></tr>
    </table>
  </div>
</div>
<script src="mesh.js"></script>
</body>
</html>
```
FILE: styles.css
```css
* { box-sizing: border-box; }
html, body { margin: 0; padding: 0; }
body {
  width: 1277px; height: 957px; overflow: hidden; position: relative;
  background: #ece9d8; color: #000;
  font: 12px/14px "Noto Sans CJK SC", "Noto Sans CJK JP", sans-serif;
}
.defs { position: absolute; }
i { display: block; font-style: normal; flex: none; }
.m { font-family: "DejaVu Sans Mono", "Liberation Mono", monospace; font-size: 10px; }
.app { display: flex; flex-direction: column; width: 1277px; height: 957px; }

/* top cut-off menu strip */
.topstrip { height: 12px; flex: none; display: flex; overflow: hidden; }
.topcut { display: flex; gap: 24px; margin-top: -11px; padding-left: 5px; height: 14px; white-space: nowrap; }
.topnote { margin-left: auto; width: 190px; height: 7px; background: #f1efe2; overflow: hidden; }
.topcut-teal { color: #007a80; padding-left: 26px; }

/* toolbars */
.group {
  display: flex; align-items: center; flex: none; border-radius: 3px; overflow: hidden;
  background: linear-gradient(#fbfaf6, #f5f3ea 60%, #ebe8d8);
}
.it { display: flex; align-items: center; flex: none; gap: 4px; padding: 0 3.5px 2px; height: 100%; white-space: nowrap; }
.it-first { padding-left: 0; }
.ic { width: 16px; height: 16px; flex: none; display: block; }
.ic14 { width: 14px; height: 14px; }
.dis { color: #a3a298; }
.on { background: #e2e7ef; box-shadow: inset 0 0 0 1px #316ac5; }
.ar { width: 0; height: 0; border: 3px solid transparent; border-top: 3px solid #000; border-bottom: 0; margin-left: 2px; }
.ar-dis { border-top-color: #a3a298; }
.ar-t { margin-left: -1px; }
.sep { width: 5px; height: 17px; background: linear-gradient(#c7c5b2, #c7c5b2) 2px 0/1px 100% no-repeat; }
.sep-w { margin: 0 1px; }
.grip { height: 15px; width: 2px; background: repeating-linear-gradient(#c4c2ae 0 2px, transparent 2px 4px); }
.tbrow { height: 24px; flex: none; display: flex; gap: 3px; }
.g-main { width: 812px; }
.g-view { width: 462px; padding-left: 1px; }
.it-white { background: #fff; width: 61px; margin-right: 1.5px; padding-left: 1px; padding-right: 0; gap: 3px; }
.it-white .ar { margin-left: 4px; }
.it-sig { padding-left: 3px; }
.sigma { font-size: 15px; font-weight: 700; text-align: center; line-height: 16px; font-family: "DejaVu Sans", sans-serif; }

/* main columns */
.main { flex: 1; display: flex; min-height: 0; }
.left { width: 296px; flex: none; display: flex; flex-direction: column; padding: 3px 4px 7px 4px; }
.right { flex: 1; display: flex; flex-direction: column; min-width: 0; }

/* left panels */
.ptitle {
  height: 15px; flex: none; display: flex; justify-content: space-between; align-items: center;
  border: 1px solid #808078; padding: 0 3px 2px 0; line-height: 12px; width: 288px; text-indent: -1px;
}
.ptitle-btns { display: flex; gap: 12px; align-items: center; }
.pin { width: 9px; height: 11px; }
.close { width: 9px; height: 9px; margin-right: 2px; }
.ltool { height: 24px; margin: 2px 0 2px 1px; width: 287px; flex: none; display: flex; align-items: center; border-radius: 3px; background: linear-gradient(#fbfaf6, #ebe8d8); }
.it-new { padding-left: 3px; }
.it-new .ar { margin-left: 0; }
.lsearch { height: 24px; flex: none; display: flex; align-items: center; gap: 5px; margin-left: 1px; }
.sinput { width: 263px; height: 24px; border: 1px solid #7f9db9; background: #fff; color: #808080; padding: 2px 2px; }
.sbtn { flex: none; margin-left: -1px; }
.tree { flex: 1; min-height: 0; margin-top: 1px; width: 288px; background: #fff; border: 1px solid #7f9db9; padding-top: 1px; }
.tnode { display: flex; align-items: center; height: 16px; padding-left: 8px; gap: 6px; }
.tnode-sub { padding-left: 31px; gap: 0; height: 17px; }
.minus { width: 10px; height: 10px; border: 1px solid #8a8a8a; background: linear-gradient(90deg, #000, #000) 1.5px 3.5px/5px 1px no-repeat, #f0f0e8; }
.dots { width: 10px; height: 16px; margin-top: -8px; align-self: flex-start; border-left: 1px dotted #888; border-bottom: 1px dotted #888; }
.gearic { width: 12px; height: 12px; margin-left: 3px; }
.tsel { background: #316ac5; margin-left: 5px; width: 37px; height: 16px; line-height: 16px; padding-left: 2px; }

.lower { height: 463px; flex: none; margin-top: 6px; display: flex; flex-direction: column; }
.ptitle-plain { border-width: 1px 0; border-color: #808078; }
.tabs { height: 21px; flex: none; display: flex; padding: 1px 0 0 1px; }
.tab { height: 19px; margin-top: 1px; padding: 3px 4px 0; border: 1px solid #8fa5b8; border-bottom: 0; border-radius: 3px 3px 0 0; background: #f4f3ec; line-height: 14px; width: 91px; white-space: nowrap; text-align: center; }
.tab-on { width: 87px; height: 21px; margin-top: -1px; background: #fbfbf8; border-top: 2px solid #f3a62e; border-left-color: #aab; padding-top: 3px; }
.tabpanel { flex: 1; min-height: 0; background: #fbfbf7; width: 286px; padding: 5px 0 0 5px; }
.btnrow { display: flex; height: 19px; gap: 1px; }
.bt { height: 19px; width: 56px; display: block; text-align: center; line-height: 14px; border: 2px solid #bcb9a8; background: #ece9d8; white-space: nowrap; flex: none; }
.bt-add { border-right-width: 1px; }
.bt-ar { width: 13px; display: flex; align-items: center; justify-content: center; margin-right: 2px; }
.bt-ar .ar { margin: 0; }
.bt-dis { color: #a3a298; }
.dwg { margin-top: 5px; height: 393px; width: 282px; border-top: 1px solid #b4b2a4; background: #fff; padding: 1px 0 0 1px; border-left: 1px solid #777; }
.dwghead { display: flex; height: 26px; margin-top: 1px; }
.dh { display: block; height: 26px; background: linear-gradient(#fdfdfb, #ebe8d9); border-right: 1px solid #bdbbab; border-bottom: 1px solid #bdbbab; text-align: center; line-height: 24px; }
.dh0 { width: 21px; }
.dh1 { width: 151px; }
.dh2 { width: 56px; }

/* right toolbars */
.tbrow2 { height: 22px; flex: none; margin: 4px 0 0 4px; display: flex; }
.g2 { width: 789px; height: 22px; }
.tbrow3 { height: 23px; flex: none; margin: 3px 0 0 4px; display: flex; justify-content: space-between; }
.g3 { width: 563px; }
.g3b { width: 339px; padding-left: 3px; }
.tbrow4 { height: 23px; flex: none; margin: 3px 0 0 4px; display: flex; gap: 2px; }
.g4 { width: 853px; }
.g4b { width: 30px; padding-left: 2px; }
.group > .grip { margin-left: 1px; }
.combo { display: flex; align-items: center; justify-content: space-between; height: 20px; flex: none; padding-right: 3px; }
.combo > span { background: #fff; display: block; height: 20px; line-height: 19px; padding-left: 3px; flex: none; }
.combo .ar { margin: 0; }
.c1 { width: 60px; margin-left: 1px; } .c1 > span { width: 47px; }
.c2 { width: 73px; } .c2 > span { width: 58px; }
.c3 { width: 72px; } .c3 > span { width: 57px; }
.c4 { width: 71px; } .c4 > span { width: 56px; }
.c5 { width: 56px; } .c5 > span { width: 46px; }
.c6 { width: 58px; margin-left: 3px; } .c6 > span { width: 46px; }
.sep-c { margin-right: 0; }
.it-sel { margin-left: 2px; padding: 0 4px 2px 4px; gap: 1px; }
.ar-s { margin: 0 5.5px 0 3px; }

/* 3d canvas */
.canvas { height: 606px; margin-top: 2px; flex: none; background: #000; position: relative; overflow: hidden; }
.scene { display: block; shape-rendering: crispEdges; }
.reds line { stroke: #f00; }
.t-axis { fill: #c8d8c8; font: 700 12px "DejaVu Sans Mono", monospace; }
.t-gray { fill: #a8a8a8; font: 13px "DejaVu Sans Mono", monospace; }
.t-green { fill: #00a000; font: 12.8px "DejaVu Sans Mono", monospace; }
.t-cn { font: 15px "Noto Sans CJK SC", sans-serif; letter-spacing: .8px; }
.t-sm { font-size: 12px; }
.cpanel { position: absolute; left: 2px; top: 2px; width: 174px; height: 70px; background: linear-gradient(#7b96e6, #8aa6ea); padding: 3px 4px 0; }
.cp-title { color: #d6e2f8; font-weight: 700; height: 17px; line-height: 16px; }
.cp-body { background: #fff; border: 1px solid #7f9db9; padding: 2px 0 0 5px; height: 50px; }
.cp-row { display: flex; align-items: center; gap: 3px; height: 11.5px; line-height: 11px; white-space: nowrap; }
.chk { width: 11px; height: 11px; border: 1px solid #9a9a90; background: #f4f4ec; }
.chk::after { content: ""; display: block; width: 5px; height: 3px; margin: 1px 0 0 2px; border-left: 2px solid #21a121; border-bottom: 2px solid #21a121; transform: rotate(-45deg); }

/* snap bar */
.snapbar { height: 27px; flex: none; margin-top: 1px; padding: 2px 0 0 4px; display: flex; gap: 3px; }
.snapbar .group { height: 24px; }
.s1 { width: 206px; }
.s2 { width: 261px; }
.s3 { width: 389px; }
.s3 .sep { margin: 0 -1px 0 1px; }
.it-gap { margin-left: 2px; }
.lblg { color: #a3a298; display: block; margin-left: 2px; flex: none; }
.lblx { margin-left: 4px; }
.lblmm { margin-left: 1px; }
.lbly { margin-left: 8px; margin-right: 1px; }
.lbld { margin-left: 9px; }
.spin { height: 19px; display: flex; align-items: center; justify-content: flex-end; border: 1px solid #b2b0a0; color: #a3a298; padding-right: 2px; gap: 7px; flex: none; margin-left: 2px; }
.spin-x { width: 56px; }
.spin-xy { width: 58px; }
.spin-r { width: 61px; margin-left: 4px; }
.sp { width: 9px; height: 13px; background:
  linear-gradient(to bottom right, transparent 49%, #9a9a90 50%) 0 0/4.5px 4px no-repeat,
  linear-gradient(to bottom left, transparent 49%, #9a9a90 50%) 4.5px 0/4.5px 4px no-repeat,
  linear-gradient(to top right, transparent 49%, #9a9a90 50%) 0 9px/4.5px 4px no-repeat,
  linear-gradient(to top left, transparent 49%, #9a9a90 50%) 4.5px 9px/4.5px 4px no-repeat; }
.cbx { width: 12px; height: 12px; border: 1px solid #9a9a90; background: #f4f2e6; margin-left: 3px; }
.rot { margin-left: 8px; flex: none; }

/* lower grid */
.lowerright { flex: 1; display: flex; min-height: 0; margin-top: 1px; }
.sidegrip { width: 12px; flex: none; padding-top: 5px; }
.redx { display: block; width: 9px; height: 9px; margin-left: 1px; }
.gripv { width: 2px; height: 184px; margin: 3px 0 0 4px; background: repeating-linear-gradient(#b5b3a0 0 1px, transparent 1px 3px); }
.gridwrap { flex: 1; min-width: 0; display: flex; flex-direction: column; }
.gridtool { height: 27px; flex: none; margin-left: 2px; display: flex; align-items: center; background: linear-gradient(#fbfaf6, #f4f2ea); padding-left: 3px; }
.gridtool .it { padding-bottom: 0; }
.nav { color: #1e5ac8; margin-right: 7.3px; }
.nav.off { color: #c4c4bc; }
.nav-up { margin-right: 6px; }
.nav-down { margin-right: 4.5px; }
.sep-a { margin: 0 5px 0 -4px; }
.sep-b { margin: 0; }
.sep-d { margin-left: 2px; }
.it-other .ar { margin-left: 0; }
.total { margin-left: 3px; }
.gridbox { height: 172px; flex: none; border-top: 1px solid #7f9db9; border-left: 1px solid #7f9db9; border-bottom: 1px solid #7f9db9; background: #fff; display: flex; flex-direction: column; padding-left: 1px; }
.gridscroll { flex: 1; min-height: 0; overflow: hidden; }
.rt { border-collapse: separate; border-spacing: 0; table-layout: fixed; width: 1041px; }
.w0 { width: 32px; } .w1 { width: 74px; } .w2 { width: 56px; } .w3 { width: 35px; } .w4 { width: 34px; } .w5 { width: 200px; } .w6 { width: 166px; } .w7 { width: 157px; } .w8 { width: 61px; } .w9 { width: 38px; } .w10 { width: 39px; } .w11 { width: 49px; } .w12 { width: 100px; }
.rt th { height: 19px; padding: 0; font-weight: 400; background: linear-gradient(#fdfdfa, #ebe8d9); border-right: 1px solid #c4c2b4; border-bottom: 1px solid #c4c2b4; line-height: 17px; white-space: nowrap; }
.rt th.oh, .pt th.oh { background: linear-gradient(#fbdfa6, #f4c672); color: #5a0a70; }
.rt td { padding: 0 2px; border-right: 1px solid #bdbdbd; border-bottom: 1px solid #bdbdbd; overflow: hidden; white-space: nowrap; background: #c9fed6; }
.r1 td, .r2 td { height: 34px; }
.r3 td { height: 30px; }
.r4 td { height: 18px; background: #fff; }
.rt td.no { text-align: center; background: linear-gradient(#fdfdfa, #ebe8d9); padding: 0; }
.rt td.no-on { background: #fed38e; color: #5a0a70; }
.rt td.nm { border-right: 2px solid #000; white-space: normal; line-height: 13px; padding: 0 2px 0 3px; word-break: break-all; }
.rt td.c { text-align: center; padding: 0; }
.rt td.tw { white-space: normal; line-height: 13px; }
.rt td.f3 { padding-left: 5px; }
.rt td.shape { padding: 0; }
.rt td.sel { background: #b2e8d4; outline: 1px dotted #6a1a40; outline-offset: -2px; }
.shp { display: block; width: 100%; height: 100%; }
.s-n { font: 10px "DejaVu Sans Mono", monospace; fill: #000; }
.s-mid { text-anchor: middle; }
.s-r { font: 10px "DejaVu Sans Mono", monospace; fill: #f00; text-anchor: middle; }
.s-l { fill: none; stroke: #000; stroke-width: 2; }
.rb { width: 10px; height: 10px; display: inline-block; vertical-align: -1px; margin: 0 1px; }
.hscroll { height: 15px; flex: none; display: flex; gap: 2px; background: #f2f2f8; }
.hs-btn { width: 15px; height: 15px; display: flex; align-items: center; justify-content: center; background: linear-gradient(#dbe6fd, #b5c9f5); border: 1px solid #fff; }
.hs-thumb { width: 837px; height: 15px; background: linear-gradient(#cfdcfb, #b8cdf8); border: 1px solid #f4f6fe; display: flex; justify-content: center; align-items: center; }
.hs-lines { width: 7px; height: 7px; background: repeating-linear-gradient(90deg, #8ca0cc 0 1px, transparent 1px 2px); }

/* property dialog */
.dialog {
  position: absolute; left: 264px; top: 176px; width: 370px; height: 540px;
  background: linear-gradient(#8aa6ea, #6e88dc); border: 1px solid #5a6cc4; padding: 0 4px 4px 3px;
  display: flex; flex-direction: column;
}
.dl-title { height: 21px; flex: none; display: flex; align-items: center; justify-content: space-between; color: #d6e2f8; font-weight: 700; letter-spacing: .5px; padding-bottom: 2px; }
.dl-x { width: 13px; height: 13px; background: #d8a0b4; border: 1px solid #fff; display: flex; align-items: center; justify-content: center; outline: 1px solid #8088c0; margin: 0 1px 0 0; }
.dl-body { flex: 1; background: #fff; padding: 1px 0 0 1px; }
.pt { border-collapse: separate; border-spacing: 0; table-layout: fixed; width: 358px; }
.p0 { width: 20px; } .p1 { width: 122px; } .p2 { width: 216px; }
.pt th { height: 22px; padding: 0; font-weight: 400; background: linear-gradient(#fdfdfa, #ebe8d9); border-right: 1px solid #c4c2b4; border-bottom: 1px solid #c4c2b4; }
.pt td { height: 19px; padding: 1px 0 0; line-height: 14px; border-right: 1px solid #bdbdbd; border-bottom: 1px solid #bdbdbd; white-space: nowrap; overflow: hidden; }
.pt td.pn { text-align: center; background: linear-gradient(#fdfdfa, #ebe8d9); }
.pt td.pn-on { background: #fed38e; color: #5a0a70; }
.pt td.a0 { padding-left: 21px; }
.pt td.a1 { padding-left: 31px;
  background: linear-gradient(#bdbdbd, #bdbdbd) 9px 0/1px 100% no-repeat, linear-gradient(#bdbdbd, #bdbdbd) 9px 9px/16px 1px no-repeat; }
.pt td.a1e { background: linear-gradient(#bdbdbd, #bdbdbd) 9px 0/1px 10px no-repeat, linear-gradient(#bdbdbd, #bdbdbd) 9px 9px/16px 1px no-repeat; }
.pt td.nm-sel { background: #316ac5; color: #eef2fb; }
.pt td.blue { color: #0000f0; }
.pt td.gry { color: #808080; padding-left: 3px; }
.tgl { display: flex; align-items: center; gap: 6px; height: 16px; }
.pt td.v { color: #808080; padding-left: 2px; }
.pt td.v2 { padding-left: 4px; }
.bx { width: 12px; height: 12px; border: 1px solid #a8a8a0; background:
  linear-gradient(#111, #111) 1.5px 4.5px/7px 1px no-repeat,
  linear-gradient(#111, #111) 4.5px 1.5px/1px 7px no-repeat, #f2f2ea; }
.bx-m { background: linear-gradient(#111, #111) 1.5px 4.5px/7px 1px no-repeat, #f2f2ea; }
```
FILE: mesh.js
```js
var NS = 'http://www.w3.org/2000/svg';
var g = document.getElementById('mesh');
function add(x1, y1, x2, y2, c, w) {
  var l = document.createElementNS(NS, 'line');
  l.setAttribute('x1', x1); l.setAttribute('y1', y1);
  l.setAttribute('x2', x2); l.setAttribute('y2', y2);
  l.setAttribute('stroke', c);
  if (w) l.setAttribute('stroke-width', w);
  g.appendChild(l);
}
var i;
for (i = 0; i < 28; i++) {
  var x = 762 + i * 9.7;
  var y = 262 - 0.231 * (x - 752);
  var yb = 558 - 0.2135 * (x - 747);
  add(x, y, x - 6, yb, '#ab9e9a');
  if (i % 2 === 0) {
    add(x, y, x + 1, y - 8, '#a89c98');
    add(x + 1, y - 8, x + 7, y - 3, '#a89c98');
  }
}
for (i = 0; i < 28; i++) {
  var yl = 265 + i * 9.9;
  var xl = 752 - i * 0.19 - (i % 2 ? 0 : 6);
  var right = i % 2 ? 1027 : 1040;
  add(xl, yl + 0.23 * (752 - xl), right, yl - 0.23 * (right - 752), '#00ffff');
}
for (i = 0; i < 13; i++) {
  var ty = 268 + i * 21;
  var tx = 743 - i * 0.6;
  add(tx, ty, tx + 7, ty + 5, '#ffff30');
}
var W = '#ffffff';
add(740, 252, 1029, 186, W, 2);
add(752, 260, 1042, 193, W, 2);
add(740, 252, 752, 260, W, 2);
add(1029, 186, 1042, 193, W, 2);
add(752, 260, 745, 565, W, 2);
add(740, 252, 733, 560, W);
add(1042, 193, 1037, 503, W, 2);
add(1029, 186, 1027, 497, W, 2);
add(745, 565, 1037, 503, W, 2);
add(747, 557, 1028, 497, W, 2);
add(733, 560, 745, 565, W, 2);
add(1028, 497, 1037, 503, W, 2);
add(1035, 190, 1032, 500, '#b3a6a2');
```
